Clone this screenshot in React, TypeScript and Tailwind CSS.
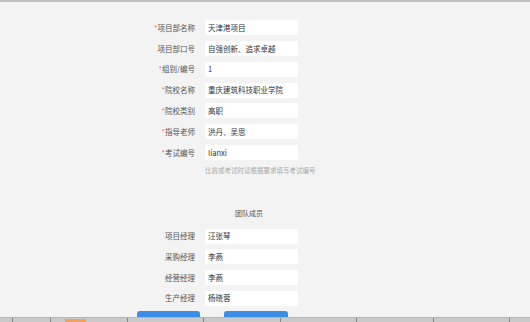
const fields = [
  { label: "项目部名称", value: "天津港项目", req: true },
  { label: "项目部口号", value: "自强创新、追求卓越", req: false },
  { label: "组别/编号", value: "1", req: true },
  { label: "院校名称", value: "重庆建筑科技职业学院", req: true },
  { label: "院校类别", value: "高职", req: true },
  { label: "指导老师", value: "洪丹、吴思", req: true },
  { label: "考试编号", value: "lianxi", req: true },
];

const members = [
  { label: "项目经理", value: "汪张琴" },
  { label: "采购经理", value: "李燕" },
  { label: "经营经理", value: "李燕" },
  { label: "生产经理", value: "杨晓蓉" },
];

const ticks = [12, 50, 127, 203, 280, 356, 433, 509];

function Row({ label, value, req }: { label: string; value: string; req?: boolean }) {
  return (
    <div className="flex items-center h-[15px]">
      <div className="w-[195px] text-right text-[#555] pr-0">
        {req && <span className="text-[#f56c6c]">*</span>}
        {label}
      </div>
      <div className="ml-[10px] w-[93px] h-[15px] bg-white flex items-center pl-[3px] text-[#333]">
        {value}
      </div>
    </div>
  );
}

export default function App() {
  return (
    <div
      className="relative w-[530px] h-[322px] overflow-hidden bg-[#f3f3f3] text-[7.5px] leading-none"
      style={{ fontFamily: '"Noto Sans CJK SC", "Noto Sans", sans-serif' }}
    >
      <div className="h-[2px] bg-[#bdbdbd]" />
      <div className="flex flex-col gap-[5.85px] pt-[18px]">
        {fields.map((f) => (
          <Row key={f.label} {...f} />
        ))}
      </div>
      <div className="ml-[205px] mt-[7px] text-[6.5px] text-[#aaa]">
        比赛或考试时请根据要求填写考试编号
      </div>
      <div className="ml-[235px] mt-[36px] text-[7px] text-[#555]">团队成员</div>
      <div className="flex flex-col gap-[5.7px] mt-[12px]">
        {members.map((m) => (
          <Row key={m.label} {...m} />
        ))}
      </div>
      <div className="flex mt-[5px]">
        <div className="ml-[137px] w-[63px] h-[10px] rounded-t-[3px] bg-[#3a8ee6]" />
        <div className="ml-[24px] w-[64px] h-[10px] rounded-t-[3px] bg-[#3a8ee6]" />
      </div>
      <div className="absolute left-0 bottom-0 w-full h-[5px] bg-[#c9c9c9] border-t border-[#b5b5b5]">
        {ticks.map((t) => (
          <div key={t} className="absolute top-0 w-px h-[4px] bg-[#888]" style={{ left: t }} />
        ))}
        <div className="absolute left-[65px] bottom-0 w-[21px] h-[3px] bg-[#f0a060]" />
      </div>
    </div>
  );
}
